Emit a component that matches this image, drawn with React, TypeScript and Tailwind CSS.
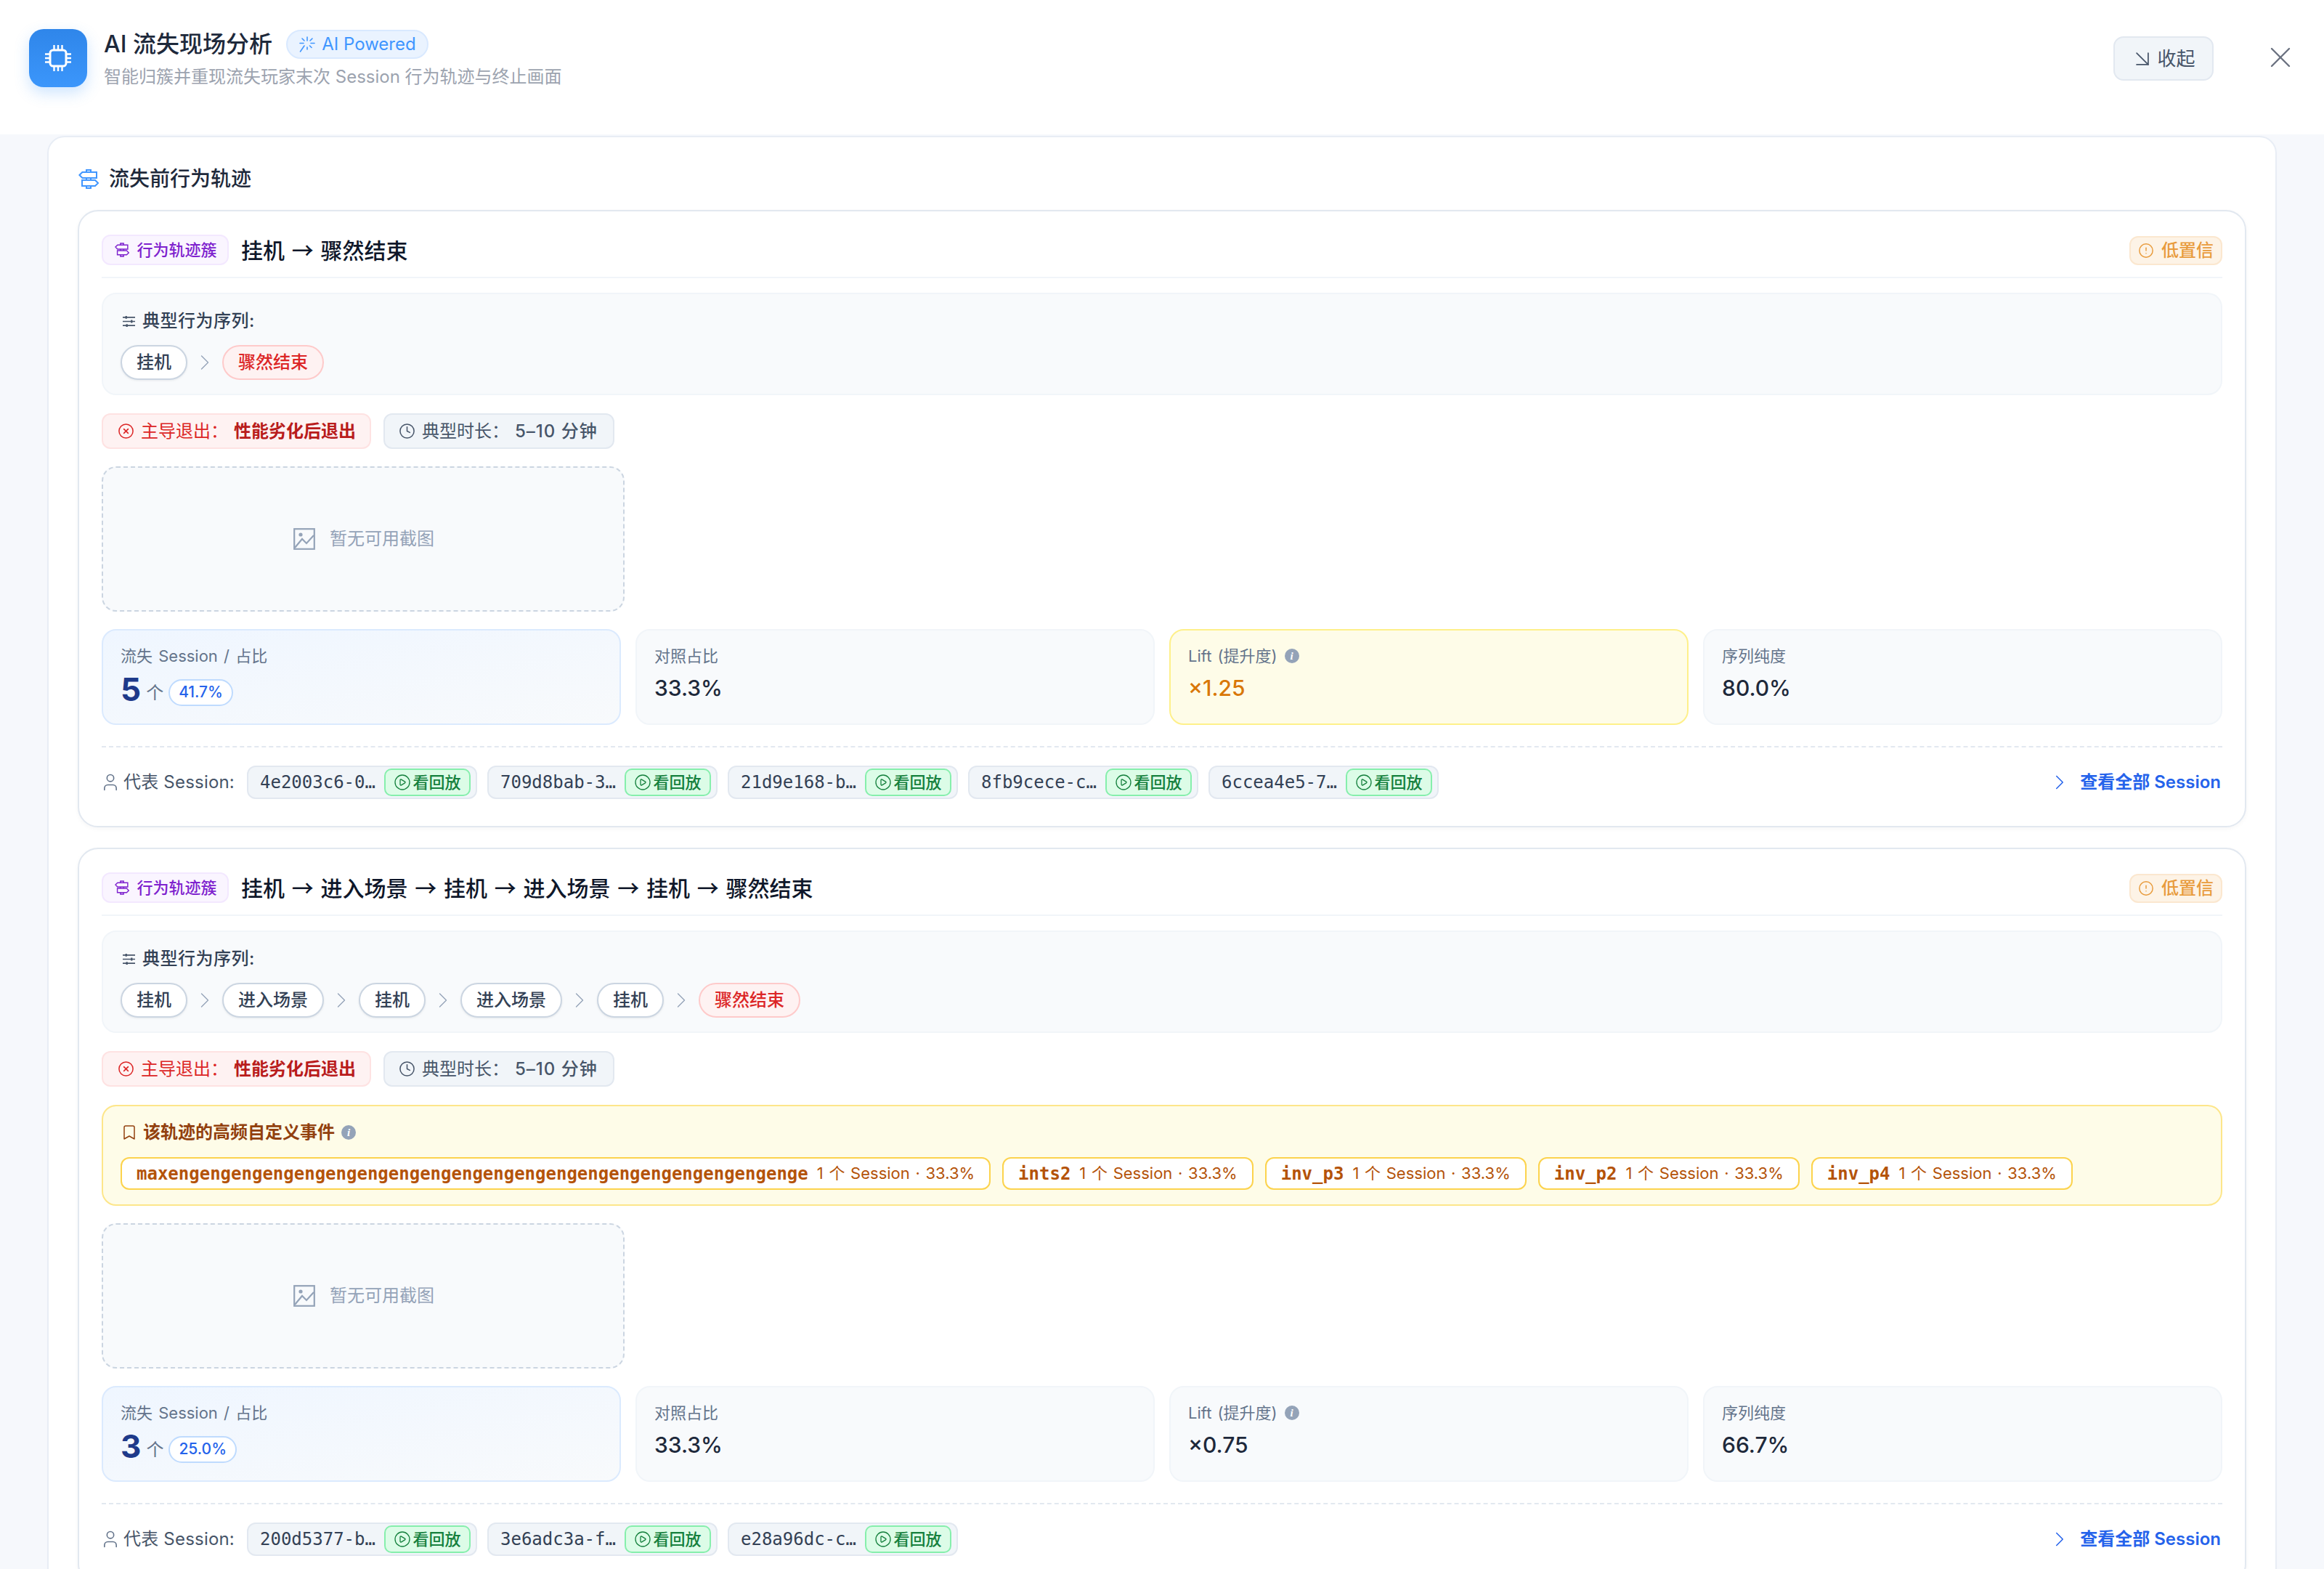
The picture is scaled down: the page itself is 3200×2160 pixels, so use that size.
import {
  ArrowDownRight,
  Bookmark,
  ChevronRight,
  CircleAlert,
  CirclePlay,
  CircleX,
  Clock,
  User,
  X,
} from "lucide-react";

type Metric = { label: string; value: string; info?: boolean; highlight?: boolean };
type Trail = {
  title: string;
  steps: string[];
  events?: { name: string; meta: string }[];
  count: string;
  share: string;
  metrics: Metric[];
  sessions: string[];
};

const trails: Trail[] = [
  {
    title: "挂机 → 骤然结束",
    steps: ["挂机", "骤然结束"],
    count: "5",
    share: "41.7%",
    metrics: [
      { label: "对照占比", value: "33.3%" },
      { label: "Lift (提升度)", value: "×1.25", info: true, highlight: true },
      { label: "序列纯度", value: "80.0%" },
    ],
    sessions: ["4e2003c6-0…", "709d8bab-3…", "21d9e168-b…", "8fb9cece-c…", "6ccea4e5-7…"],
  },
  {
    title: "挂机 → 进入场景 → 挂机 → 进入场景 → 挂机 → 骤然结束",
    steps: ["挂机", "进入场景", "挂机", "进入场景", "挂机", "骤然结束"],
    events: [
      { name: "max" + "eng".repeat(20) + "e", meta: "1 个 Session · 33.3%" },
      { name: "ints2", meta: "1 个 Session · 33.3%" },
      { name: "inv_p3", meta: "1 个 Session · 33.3%" },
      { name: "inv_p2", meta: "1 个 Session · 33.3%" },
      { name: "inv_p4", meta: "1 个 Session · 33.3%" },
    ],
    count: "3",
    share: "25.0%",
    metrics: [
      { label: "对照占比", value: "33.3%" },
      { label: "Lift (提升度)", value: "×0.75", info: true },
      { label: "序列纯度", value: "66.7%" },
    ],
    sessions: ["200d5377-b…", "3e6adc3a-f…", "e28a96dc-c…"],
  },
];

function SignpostIcon({ className }: { className?: string }) {
  return (
    <svg viewBox="0 0 28 27" fill="none" stroke="currentColor" strokeWidth="2" className={className}>
      <path d="M1.4 8l4-4H25v8H5.4z" />
      <path d="M5 15h18l4 4-4 4H5z" />
      <path d="M11 4V1h6v3M11 12v3M17 12v3M11 23v3h6v-3" />
    </svg>
  );
}

function ChipIcon({ className }: { className?: string }) {
  return (
    <svg viewBox="0 0 36 36" fill="none" stroke="currentColor" strokeWidth="3" className={className}>
      <rect x="7" y="7" width="22" height="22" rx="4" />
      <path d="M12.5 0v6M18 0v6M23.500 0v6M12.500 30v6M18 30v6M23.500 30v6M0 12.500h6M0 18h6M0 23.500h6M30 12.500h6M30 18h6M30 23.500h6" strokeWidth="2.4" />
    </svg>
  );
}

function SparkIcon({ className }: { className?: string }) {
  return (
    <svg viewBox="0 0 24 24" fill="none" stroke="currentColor" strokeWidth="1.6" strokeLinecap="round" className={className}>
      <path d="M12 2v5M12 16v3M2 10.5h5M17 10.5h5M5 4l3 3M19 4l-3 3M15.5 14l2.5 2.5M8 14L2.5 22" />
    </svg>
  );
}

function PictureIcon({ className }: { className?: string }) {
  return (
    <svg viewBox="0 0 30 30" fill="none" stroke="currentColor" strokeWidth="2.2" className={className}>
      <rect x="1.2" y="1.2" width="27.6" height="27.6" />
      <circle cx="10" cy="9" r="2.6" fill="currentColor" stroke="none" />
      <path d="M2 27l10-12 6 6 10-11" />
    </svg>
  );
}

function SlidersIcon({ className }: { className?: string }) {
  return (
    <svg viewBox="0 0 20 18" fill="none" stroke="currentColor" strokeWidth="1.8" className={className}>
      <path d="M1 3h18M1 9h18M1 15h18" />
      <path d="M6 1v4M14 7v4M7 13v4" strokeWidth="2.4" />
    </svg>
  );
}

function InfoDot() {
  return (
    <span className="flex h-[20px] w-[20px] shrink-0 items-center justify-center rounded-full bg-[#94a3b8] text-[15px] font-bold italic leading-none text-white [font-family:'Liberation_Serif',serif]">
      i
    </span>
  );
}

function SessionChip({ id }: { id: string }) {
  return (
    <div className="flex h-[46px] items-center rounded-[12px] border-2 border-[#e2e8f0] bg-[#f1f5f9] pl-[16px] pr-[7px]">
      <span className="w-[159px] whitespace-nowrap text-[24px] text-[#334155] [font-family:'DejaVu_Sans_Mono',monospace]">{id}</span>
      <button className="ml-[12px] flex h-[38px] w-[119px] items-center justify-center gap-[2px] rounded-[10px] border-2 border-[#86efac] bg-[#dcfce7] text-[22px] font-medium text-[#15803d]">
        <CirclePlay className="h-[24px] w-[24px]" strokeWidth={1.3} />
        看回放
      </button>
    </div>
  );
}

function TrailCard({ trail }: { trail: Trail }) {
  return (
    <div className="rounded-[28px] border-2 border-[#e2e8f0] bg-white pb-[37px] pl-[31px] pr-[31px] pt-[32px] shadow-[0_2px_6px_rgba(15,23,42,0.04)]">
      <div className="mb-[20px] flex items-center border-b-2 border-[#f1f5f9] pb-[16px]">
        <span className="flex h-[42px] w-[175px] items-center justify-center gap-[10px] rounded-[12px] border-2 border-[#f3e8ff] bg-[#faf5ff] pl-[2px] text-[22px] font-medium text-[#7e22ce]">
          <SignpostIcon className="h-[20px] w-[20px]" />
          行为轨迹簇
        </span>
        <span className="ml-[17px] -mt-[2px] text-[30px] font-medium leading-[42px] text-[#0f172a] [font-family:'Noto_Sans_CJK_SC',sans-serif] [word-spacing:3px]">{trail.title}</span>
        <span className="ml-auto mt-[2px] flex h-[40px] w-[128px] items-center justify-center gap-[10px] rounded-[12px] border-2 border-[#fbe7cf] bg-[#fdf3e6] text-[24px] font-medium text-[#e89b3c]">
          <CircleAlert className="h-[22px] w-[22px]" strokeWidth={1.6} />
          低置信
        </span>
      </div>

      <div className="rounded-[20px] border-2 border-[#f1f5f9] bg-[#f8fafc] px-[24px] pb-[19px] pt-[23px]">
        <div className="mb-[19px] flex h-[28px] items-center gap-[9px] text-[24px] font-medium leading-[28px] tracking-[0.5px] text-[#334155]">
          <SlidersIcon className="ml-[2px] h-[17px] w-[19px] text-[#475569]" />
          典型行为序列:
        </div>
        <div className="flex items-center">
          {trail.steps.map((step, i) => {
            const last = i === trail.steps.length - 1;
            return (
              <div key={i} className="flex items-center">
                <span
                  className={
                    last
                      ? "flex h-[48px] items-center rounded-full border-2 border-[#fecaca] bg-[#fef2f2] px-[20px] text-[24px] font-medium text-[#dc2626]"
                      : "flex h-[48px] items-center rounded-full border-2 border-[#cbd5e1] bg-white px-[20px] text-[24px] font-medium text-[#334155] shadow-[0_1px_3px_rgba(15,23,42,0.08)]"
                  }
                >
                  {step}
                </span>
                {!last && (
                  <ChevronRight className="mx-[6px] h-[36px] w-[36px] text-[#94a3b8]" strokeWidth={0.9} />
                )}
              </div>
            );
          })}
        </div>
      </div>

      <div className="mt-[25px] flex gap-[17px]">
        <span className="flex h-[49px] items-center rounded-[12px] border-2 border-[#fee2e2] bg-[#fef2f2] pl-[20px] pr-[19px] text-[24px] text-[#dc2626]">
          <CircleX className="mr-[9px] h-[23px] w-[23px]" strokeWidth={1.6} />
          <span className="mr-[8px]">主导退出：</span>
          <span className="font-semibold text-[#b91c1c]">性能劣化后退出</span>
        </span>
        <span className="flex h-[49px] items-center rounded-[12px] border-2 border-[#e2e8f0] bg-[#f1f5f9] pl-[19px] pr-[21px] text-[24px] text-[#475569]">
          <Clock className="mr-[9px] h-[23px] w-[23px]" strokeWidth={1.6} />
          <span className="mr-[8px]">典型时长：</span>
          <span className="font-medium tracking-[1px]">5–10 分钟</span>
        </span>
      </div>

      {trail.events && (
        <div className="mt-[25px] rounded-[20px] border-2 border-[#fde68a] bg-[#fefce8] px-[24px] pb-[20px] pt-[22px]">
          <div className="mb-[20px] flex h-[28px] items-center text-[24px] font-semibold leading-[28px] text-[#92400e]">
            <Bookmark className="mr-[7px] h-[24px] w-[24px]" strokeWidth={1.5} />
            该轨迹的高频自定义事件
            <span className="ml-[9px]">
              <InfoDot />
            </span>
          </div>
          <div className="flex gap-[16px]">
            {trail.events.map((e) => (
              <span
                key={e.name}
                className="flex h-[45px] items-center gap-[12px] rounded-[12px] border-2 border-[#fcd34d] bg-white px-[20px] whitespace-nowrap"
              >
                <span className="text-[24px] font-bold text-[#b45309] [font-family:'DejaVu_Sans_Mono',monospace]">{e.name}</span>
                <span className="text-[22px] text-[#b45309] [word-spacing:1.5px]">{e.meta}</span>
              </span>
            ))}
          </div>
        </div>
      )}

      <div className="mt-[24px] flex h-[200px] w-[720px] items-center justify-center gap-[20px] rounded-[20px] border-2 border-dashed border-[#cbd5e1] bg-[#f8fafc] pl-[2px] text-[24px] text-[#94a3b8]">
        <PictureIcon className="h-[30px] w-[30px]" />
        暂无可用截图
      </div>

      <div className="mt-[24px] grid grid-cols-4 gap-[20px]">
        <div className="h-[132px] rounded-[20px] border-2 border-[#dbeafe] bg-gradient-to-br from-[#eff6ff] to-[#f8fafc] pl-[24px] pt-[21px]">
          <div className="text-[22px] leading-[28px] text-[#64748b] [word-spacing:2px]">流失 Session / 占比</div>
          <div className="mt-[8px] flex h-[48px] items-center">
            <span className="text-[44px] font-bold leading-none text-[#1e3a8a]">{trail.count}</span>
            <span className="ml-[7px] mt-[10px] text-[24px] text-[#64748b]">个</span>
            <span className="ml-[7px] mt-[8px] flex h-[37px] items-center rounded-full border-2 border-[#bfdbfe] bg-white px-[12px] text-[21px] font-medium text-[#2563eb]">
              {trail.share}
            </span>
          </div>
        </div>
        {trail.metrics.map((m) => (
          <div
            key={m.label}
            className={
              m.highlight
                ? "h-[132px] rounded-[20px] border-2 border-[#fef08a] bg-[#fefce8] pl-[24px] pt-[21px]"
                : "h-[132px] rounded-[20px] border-2 border-[#f1f5f9] bg-[#f8fafc] pl-[24px] pt-[21px]"
            }
          >
            <div className="flex items-center gap-[10px] text-[22px] leading-[28px] text-[#64748b] [word-spacing:2px]">
              {m.label}
              {m.info && <InfoDot />}
            </div>
            <div
              className={
                m.highlight
                  ? "mt-[8px] text-[30px] font-medium leading-[44px] text-[#d97706]"
                  : "mt-[8px] text-[30px] font-medium leading-[44px] text-[#1e293b]"
              }
            >
              {m.value}
            </div>
          </div>
        ))}
      </div>

      <div className="mt-[29px] flex items-center border-t-2 border-dashed border-[#e2e8f0] pt-[25px]">
        <User className="-ml-[2px] mr-[4px] h-[28px] w-[28px] text-[#64748b]" strokeWidth={1.4} />
        <span className="mr-[17px] text-[24px] tracking-[0.2px] text-[#475569]">代表 Session:</span>
        <div className="flex gap-[14px]">
          {trail.sessions.map((id) => (
            <SessionChip key={id} id={id} />
          ))}
        </div>
        <a className="ml-auto flex items-center pr-[2px] text-[24px] font-semibold text-[#2563eb]">
          <ChevronRight className="mr-[11px] h-[34px] w-[34px]" strokeWidth={1.1} />
          查看全部 Session
        </a>
      </div>
    </div>
  );
}

export default function App() {
  return (
    <div className="h-[2160px] w-[3200px] overflow-hidden bg-[#f6f8fc] [font-family:Inter,'Noto_Sans_CJK_SC',sans-serif]">
      <header className="flex h-[185px] items-start bg-white pl-[40px] pr-[36px] pt-[40px]">
        <div className="flex h-[80px] w-[80px] items-center justify-center rounded-[20px] bg-gradient-to-b from-[#2f86ea] to-[#3b96fb] text-white shadow-[0_8px_20px_rgba(59,150,251,0.25)]">
          <ChipIcon className="h-[36px] w-[36px]" />
        </div>
        <div className="ml-[23px]">
          <div className="flex h-[42px] items-center">
            <span className="text-[32px] font-medium text-[#1e293b]">AI 流失现场分析</span>
            <span className="ml-[19px] flex h-[40px] w-[196px] items-center justify-center gap-[8px] rounded-full border-2 border-[#d9e9ff] bg-[#eaf3ff] text-[24px] text-[#4096ff]">
              <SparkIcon className="h-[24px] w-[24px]" />
              AI Powered
            </span>
          </div>
          <div className="mt-[8px] text-[24px] leading-[32px] text-[#9ca3af]">
            智能归簇并重现流失玩家末次 Session 行为轨迹与终止画面
          </div>
        </div>
        <button className="ml-auto mt-[10px] flex h-[61px] w-[138px] items-center justify-center gap-[1px] rounded-[14px] border-2 border-[#e2e8f0] bg-[#f1f5f9] pr-[4px] text-[26px] text-[#475569]">
          <ArrowDownRight className="h-[38px] w-[38px]" strokeWidth={1.1} />
          收起
        </button>
        <X className="ml-[68px] mt-[15px] h-[48px] w-[48px] text-[#6b7280]" strokeWidth={1.2} />
      </header>

      <main className="px-[65px] pt-[2px]">
        <section className="rounded-[24px] border-2 border-[#e8edf5] bg-white px-[40px] pt-[37px]">
          <div className="mb-[23px] flex h-[40px] items-center gap-[14px] text-[28px] font-medium text-[#1e293b]">
            <SignpostIcon className="ml-[1px] h-[27px] w-[28px] text-[#4096ff]" />
            流失前行为轨迹
          </div>
          <div className="flex flex-col gap-[28px]">
            {trails.map((trail) => (
              <TrailCard key={trail.title} trail={trail} />
            ))}
          </div>
        </section>
      </main>
    </div>
  );
}
